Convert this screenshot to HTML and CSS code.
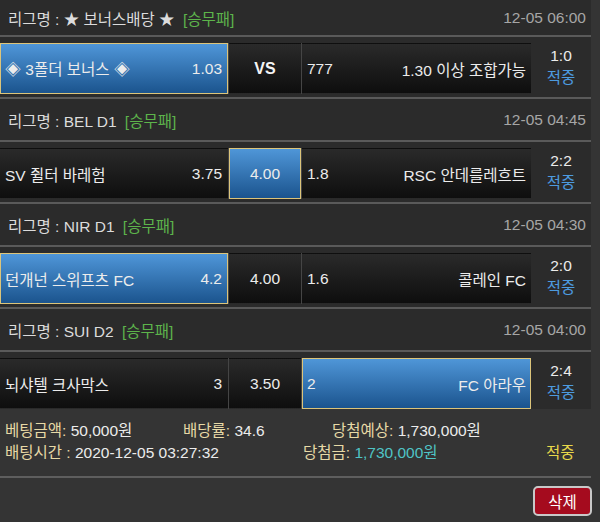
FILE: index.html
```html
<!DOCTYPE html>
<html lang="ko">
<head>
<meta charset="utf-8">
<title>Bet</title>
<link rel="stylesheet" href="styles.css">
</head>
<body>
<div class="list">
  <div class="league first">
    <span class="lname">리그명 : ★ 보너스배당 ★ <span class="type">[승무패]</span></span>
    <span class="date">12-05 06:00</span>
  </div>
  <div class="match">
    <div class="cells">
      <div class="cell home sel"><span>◈ 3폴더 보너스 ◈</span><span>1.03</span></div>
      <div class="cell draw"><b class="vs">VS</b></div>
      <div class="cell away"><span>777</span><span>1.30 이상 조합가능</span></div>
    </div>
    <div class="score"><span>1:0</span><span class="hit">적중</span></div>
  </div>

  <div class="league">
    <span class="lname">리그명 : BEL D1 <span class="type">[승무패]</span></span>
    <span class="date">12-05 04:45</span>
  </div>
  <div class="match">
    <div class="cells">
      <div class="cell home"><span>SV 쥘터 바레험</span><span>3.75</span></div>
      <div class="cell draw sel"><span>4.00</span></div>
      <div class="cell away"><span>1.8</span><span>RSC 안데를레흐트</span></div>
    </div>
    <div class="score"><span>2:2</span><span class="hit">적중</span></div>
  </div>

  <div class="league">
    <span class="lname">리그명 : NIR D1 <span class="type">[승무패]</span></span>
    <span class="date">12-05 04:30</span>
  </div>
  <div class="match">
    <div class="cells">
      <div class="cell home sel"><span>던개넌 스위프츠 FC</span><span>4.2</span></div>
      <div class="cell draw"><span>4.00</span></div>
      <div class="cell away"><span>1.6</span><span>콜레인 FC</span></div>
    </div>
    <div class="score"><span>2:0</span><span class="hit">적중</span></div>
  </div>

  <div class="league">
    <span class="lname">리그명 : SUI D2 <span class="type">[승무패]</span></span>
    <span class="date">12-05 04:00</span>
  </div>
  <div class="match last">
    <div class="cells">
      <div class="cell home"><span>뇌샤텔 크사막스</span><span>3</span></div>
      <div class="cell draw"><span>3.50</span></div>
      <div class="cell away sel"><span>2</span><span>FC 아라우</span></div>
    </div>
    <div class="score"><span>2:4</span><span class="hit">적중</span></div>
  </div>
</div>

<div class="summary">
  <div class="sline">
    <span class="c1"><span class="lbl">베팅금액:</span> 50,000원</span>
    <span class="c2"><span class="lbl">배당률:</span> 34.6</span>
    <span class="c3"><span class="lbl">당첨예상:</span> 1,730,000원</span>
  </div>
  <div class="sline">
    <span class="d1"><span class="lbl">배팅시간 :</span> 2020-12-05 03:27:32</span>
    <span class="d2"><span class="lbl">당첨금:</span> <span class="win">1,730,000원</span></span>
    <span class="d3">적중</span>
  </div>
</div>
<div class="actions">
  <button class="del">삭제</button>
</div>
</body>
</html>
```

FILE: styles.css
```css
body {
  margin: 0;
  background: #343434;
  font-family: "Liberation Sans", "Noto Sans CJK KR", sans-serif;
  font-size: 15.5px;
  color: #ececec;
}

.list {
  width: 591px;
  background: #2b2b2b;
}

.league {
  height: 41px;
  display: flex;
  align-items: center;
  justify-content: space-between;
  padding: 0 5px 0 8px;
  border-bottom: 2px solid #5a5a5a;
}

.league.first {
  height: 35px;
}

.lname {
  color: #dcdcdc;
}

.type {
  color: #5db44b;
  margin-left: 4px;
}

.date {
  color: #a6a6a6;
}

.match {
  display: flex;
  padding: 6px 0 3px;
  border-bottom: 2px solid #5a5a5a;
}

.match.last {
  padding-bottom: 0;
  border-bottom: none;
}

.cells {
  display: flex;
  gap: 1px;
  width: 531px;
  height: 51px;
  background: #454545;
}

.cell {
  box-sizing: border-box;
  border: 1px solid transparent;
  background: linear-gradient(#2a2a2a, #0e0e0e);
  display: flex;
  align-items: center;
  justify-content: space-between;
  white-space: nowrap;
}

.home {
  width: 228px;
  padding: 0 5px 0 4px;
}

.draw {
  width: 72px;
  justify-content: center;
}

.away {
  width: 229px;
  padding: 0 4px 0 4px;
}

.sel {
  background: linear-gradient(#4f96d8, #1b548e);
  border-color: #dcc47a;
}

.vs {
  font-size: 16px;
  font-weight: bold;
  color: #f4f4f4;
}

.score {
  width: 60px;
  display: flex;
  flex-direction: column;
  align-items: center;
  justify-content: center;
  line-height: 22px;
  padding-bottom: 3px;
}

.hit {
  color: #4d9be0;
}

.summary {
  width: 591px;
  box-sizing: border-box;
  padding: 11px 5px 12px;
  line-height: 22px;
  border-bottom: 2px solid #5e5e5e;
}

.sline {
  display: flex;
  white-space: nowrap;
}

.lbl {
  color: #e7d9a6;
}

.c1 { width: 178px; }
.c2 { width: 149px; }
.d1 { width: 298px; }
.d2 { width: 243px; }

.win {
  color: #4fc4c6;
}

.d3 {
  color: #e8d84a;
}

.actions {
  width: 591px;
  display: flex;
  justify-content: flex-end;
  padding-top: 8px;
}

.del {
  width: 59px;
  height: 30px;
  box-sizing: border-box;
  border: 2px solid #c8c8c8;
  border-radius: 5px;
  background: #a50b1e;
  color: #ffffff;
  font-family: "Liberation Sans", "Noto Sans CJK KR", sans-serif;
  font-size: 15.5px;
  padding: 0;
  margin-right: -1px;
}
```
